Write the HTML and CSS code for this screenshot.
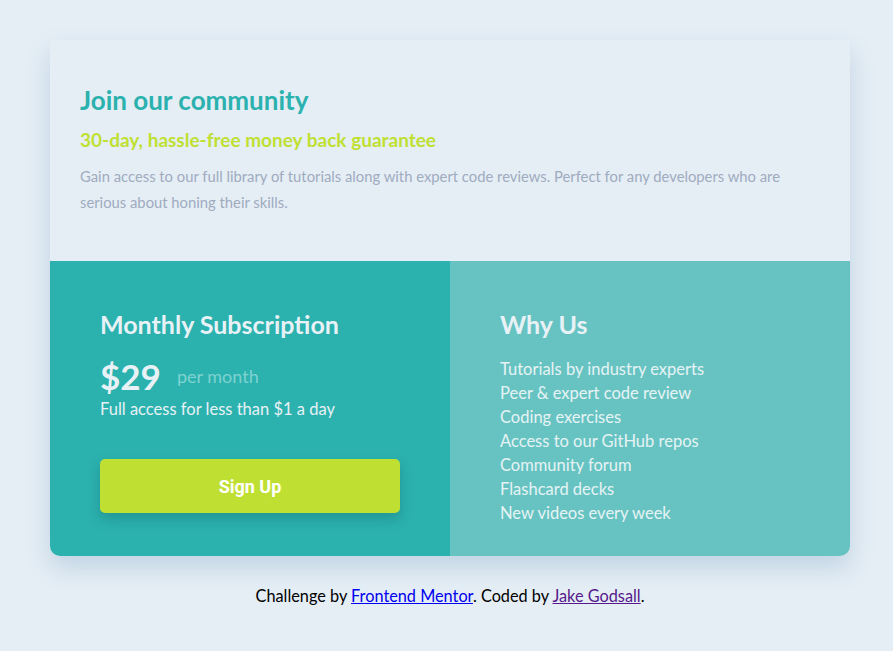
FILE: index.html
```html
<!DOCTYPE html>
<html lang="en">
<head>
<meta charset="utf-8">
<title>Single Price Grid</title>
<link rel="stylesheet" href="styles.css">
</head>
<body>
<main class="page">
  <section class="card">
    <div class="intro">
      <h1 class="intro-title">Join our community</h1>
      <h2 class="intro-sub">30-day, hassle-free money back guarantee</h2>
      <p class="intro-text">Gain access to our full library of tutorials along with expert code reviews. Perfect for any developers who are serious about honing their skills.</p>
    </div>
    <div class="bottom">
      <div class="sub">
        <h3 class="panel-title">Monthly Subscription</h3>
        <div class="price-row"><span class="price">$29</span><span class="per">per month</span></div>
        <p class="sub-note">Full access for less than $1 a day</p>
        <button class="signup">Sign Up</button>
      </div>
      <div class="why">
        <h3 class="panel-title">Why Us</h3>
        <ul class="why-list">
          <li>Tutorials by industry experts</li>
          <li>Peer &amp; expert code review</li>
          <li>Coding exercises</li>
          <li>Access to our GitHub repos</li>
          <li>Community forum</li>
          <li>Flashcard decks</li>
          <li>New videos every week</li>
        </ul>
      </div>
    </div>
  </section>
  <p class="attribution">Challenge by <a href="https://www.frontendmentor.io" class="fm">Frontend Mentor</a>. Coded by <a href="#" class="me">Jake Godsall</a>.</p>
</main>
</body>
</html>
```
FILE: styles.css
```css
* { box-sizing: border-box; }
body {
  margin: 0;
  background: #e5eef5;
  font-family: "Lato", "Noto Sans", sans-serif;
}
.page {
  width: 800px;
  margin-left: 50px;
  padding-top: 40px;
  display: flex;
  flex-direction: column;
  align-items: center;
}
.card {
  width: 800px;
  border-radius: 0 0 10px 10px;
  box-shadow: 0 12px 24px rgba(70, 120, 170, 0.22);
  background: #e5eef5;
}
.intro {
  padding: 44px 30px 46px;
}
.intro-title {
  margin: 0;
  font-size: 26px;
  font-weight: 700;
  color: #2bb1ae;
  line-height: 32px;
}
.intro-sub {
  margin: 12px 0 0;
  font-size: 19px;
  font-weight: 700;
  color: #bfe032;
  line-height: 24px;
}
.intro-text {
  margin: 11px 0 0;
  font-size: 14.8px;
  line-height: 26px;
  color: #9fabbf;
}
.bottom {
  display: grid;
  grid-template-columns: 1fr 1fr;
}
.sub {
  background: #2bb1ae;
  border-bottom-left-radius: 10px;
  padding: 47px 50px 43px;
}
.why {
  background: #67c3c2;
  border-bottom-right-radius: 10px;
  padding: 47px 50px 30px;
}
.panel-title {
  margin: 0;
  font-size: 25px;
  font-weight: 700;
  color: #e8f2f6;
  line-height: 32px;
}
.price-row {
  display: flex;
  align-items: center;
  margin-top: 18px;
  gap: 16px;
}
.price {
  font-size: 35px;
  font-weight: 700;
  color: #e8f2f6;
  line-height: 36px;
}
.per {
  font-size: 18px;
  color: #7ed3d1;
}
.sub-note {
  margin: 5px 0 0;
  font-size: 16.5px;
  color: #e8f2f6;
  line-height: 20px;
}
.signup {
  display: block;
  width: 300px;
  height: 54px;
  margin-top: 40px;
  border: none;
  border-radius: 5px;
  background: #bfe032;
  color: #fff;
  font-family: "Roboto", "Liberation Sans", sans-serif;
  font-weight: 700;
  font-size: 18px;
  box-shadow: 0 6px 12px rgba(20, 110, 115, 0.4);
}
.why-list {
  list-style: none;
  margin: 17px 0 0;
  padding: 0;
  font-size: 16.5px;
  line-height: 24px;
  color: #e6f3f4;
}
.attribution {
  margin: 30px 0 0;
  font-size: 16.3px;
  color: #000;
}
.attribution .fm { color: #0000ee; }
.attribution .me { color: #551a8b; }
```
